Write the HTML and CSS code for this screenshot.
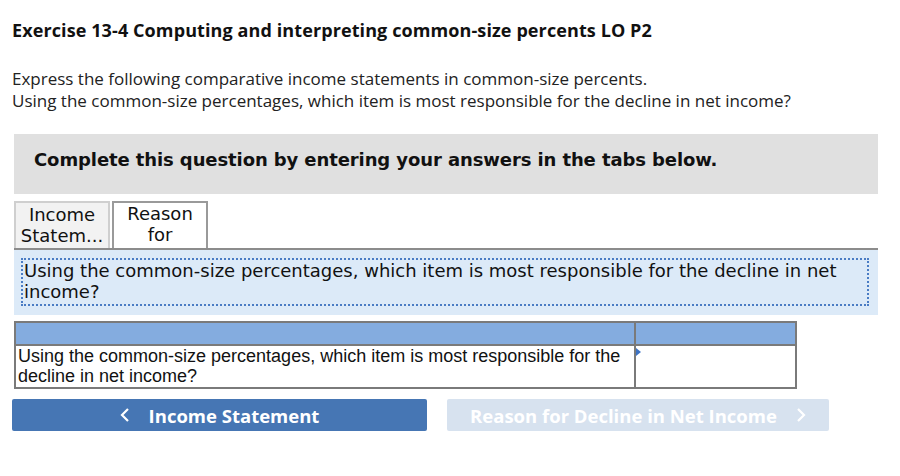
FILE: index.html
```html
<!DOCTYPE html>
<html lang="en">
<head>
    <meta charset="utf-8">
    <title>Exercise 13-4</title>
    <link rel="stylesheet" href="styles.css">
</head>
<body>
<div class="page">
    <h1 class="title">Exercise 13-4 Computing and interpreting common-size percents LO P2</h1>
    <p class="intro">Express the following comparative income statements in common-size percents.<br>
        Using the common-size percentages, which item is most responsible for the decline in net income?</p>

    <div class="notice">Complete this question by entering your answers in the tabs below.</div>

    <div class="tabs">
        <div class="tab">Income<br>Statem...</div>
        <div class="tab active">Reason<br>for</div>
    </div>

    <div class="question">
        <div class="question-box">Using the common-size percentages, which item is most responsible for the decline in net income?</div>
    </div>

    <table class="answer">
        <tr class="head">
            <td class="label"></td>
            <td class="field"></td>
        </tr>
        <tr class="row">
            <td class="label">Using the common-size percentages, which item is most responsible for the decline in net income?</td>
            <td class="field"><span class="marker"></span></td>
        </tr>
    </table>

    <div class="nav">
        <a class="nav-btn prev" href="#">
            <svg class="chev" viewBox="0 0 10 16" width="10" height="16"><path d="M8 2 L2 8 L8 14" fill="none" stroke="#fff" stroke-width="2.2"/></svg>
            Income Statement
        </a>
        <a class="nav-btn next" href="#">
            Reason for Decline in Net Income
            <svg class="chev" viewBox="0 0 10 16" width="10" height="16"><path d="M2 2 L8 8 L2 14" fill="none" stroke="#fff" stroke-width="2.2"/></svg>
        </a>
    </div>
</div>
</body>
</html>
```

FILE: styles.css
```css
body {
    margin: 0;
    background: #fff;
    color: #111;
}
.page {
    padding: 19px 0 0 12px;
    width: 866px;
}
.title {
    margin: 0;
    font-family: "Open Sans", sans-serif;
    font-size: 18px;
    font-weight: bold;
    letter-spacing: 0.1px;
    line-height: 22px;
}
.intro {
    margin: 27px 0 0;
    font-family: "Open Sans", sans-serif;
    font-size: 17px;
    line-height: 22px;
    color: #222;
}
.notice {
    margin: 22px 0 0 2px;
    height: 60px;
    padding: 0 20px;
    background: #e0e0e0;
    font-family: "DejaVu Sans", Verdana, sans-serif;
    font-size: 18px;
    font-weight: bold;
    letter-spacing: -0.1px;
    line-height: 52px;
}
.tabs {
    display: flex;
    gap: 2px;
    margin: 7px 0 0 2px;
    border-bottom: 2px solid #8c8c8c;
}
.tab {
    width: 92px;
    height: 44px;
    padding-top: 1px;
    border: 2px solid #cfcfcf;
    border-bottom: none;
    background: #f2f2f2;
    font-family: "DejaVu Sans", Verdana, sans-serif;
    font-size: 18px;
    line-height: 21px;
    text-align: center;
    color: #111;
}
.tab.active {
    border-color: #9a9a9a;
    background: #fff;
    padding-top: 0;
    height: 45px;
}
.question {
    margin-left: 2px;
    padding: 8px 9px 9px 7px;
    background: #dceaf8;
}
.question-box {
    border: 2px dotted #4a7cc4;
    padding: 0 0 2px 1px;
    font-family: "DejaVu Sans", Verdana, sans-serif;
    font-size: 18px;
    line-height: 21px;
    color: #111;
}
.answer {
    margin: 6px 0 0 2px;
    width: 783px;
    border-collapse: collapse;
    border: 2px solid #7a7a7a;
    font-family: "Liberation Sans", Arial, sans-serif;
    font-size: 18px;
    line-height: 20px;
    color: #111;
}
.answer td {
    border: 2px solid #7a7a7a;
    padding: 0 2px;
    vertical-align: top;
}
.answer .head td {
    height: 21px;
    background: #84acdf;
}
.answer .label {
    width: 614px;
}
.answer .row td {
    height: 41px;
}
.answer .field {
    position: relative;
}
.marker {
    position: absolute;
    left: 0;
    top: 2px;
    border-left: 5px solid #3d73c4;
    border-top: 4px solid transparent;
    border-bottom: 4px solid transparent;
}
.nav {
    display: flex;
    gap: 20px;
    margin-top: 10px;
}
.nav-btn {
    display: flex;
    align-items: center;
    justify-content: center;
    gap: 19px;
    height: 32px;
    border-radius: 2px;
    font-family: "Open Sans", sans-serif;
    font-size: 18.5px;
    font-weight: bold;
    color: #fff;
    text-decoration: none;
}
.nav-btn.prev {
    width: 415px;
    background: #4676b4;
}
.nav-btn.next {
    width: 382px;
    background: #d7e2ef;
}
```
